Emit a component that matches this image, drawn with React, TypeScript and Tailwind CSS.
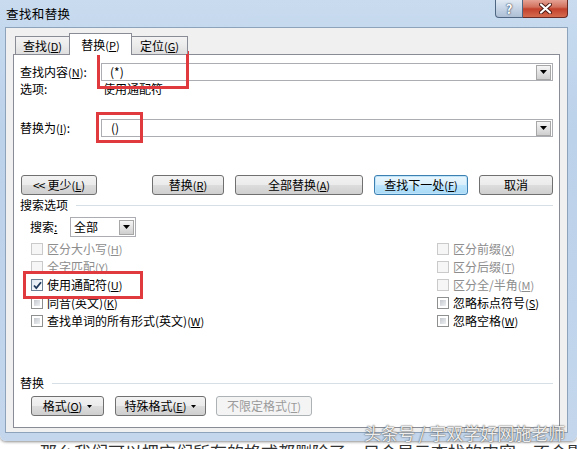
import React from "react"

const btnBase =
    "h-[20px] flex items-center justify-center rounded-[3px] border text-[12px] leading-[14px]"
const btnNormal =
    "text-black border-[#707070] bg-[linear-gradient(180deg,#f2f2f2_0%,#ebebeb_50%,#dddddd_50%,#cfcfcf_100%)]"
const btnFocus =
    "text-black border-[#3c7fb1] bg-[linear-gradient(180deg,#eaf6fd_0%,#d9f0fc_50%,#bee6fd_50%,#a7d9f5_100%)] shadow-[inset_0_0_0_1px_#bfe4f9]"
const btnDisabled = "border-[#adb2b5] bg-[#f4f4f4] text-[#9a9a9a]"

function Mn({ text, k }: { text: string; k: string }) {
    return (
        <span>
            {text}
            <span className="text-[11px]">
                (<span className="underline underline-offset-1">{k}</span>)
            </span>
        </span>
    )
}

function Arrow() {
    return (
        <span className="w-[15px] h-[15px] shrink-0 flex items-center justify-center border border-[#a7a7a7] bg-[linear-gradient(180deg,#f6f6f6_0%,#e2e2e2_50%,#cfcfcf_100%)]">
            <svg width="7" height="4" viewBox="0 0 7 4">
                <path d="M0 0h7L3.5 4z" fill="#000" />
            </svg>
        </span>
    )
}

function Caret() {
    return (
        <svg width="5" height="3" viewBox="0 0 5 3" className="ml-[5px]">
            <path d="M0 0h5L2.5 3z" fill="#000" />
        </svg>
    )
}

function Check({ state }: { state: "disabled" | "off" | "on" }) {
    if (state === "disabled") {
        return <span className="w-[12px] h-[12px] shrink-0 border border-[#cacaca] bg-[#f6f6f6]" />
    }
    if (state === "on") {
        return (
            <span className="w-[12px] h-[12px] shrink-0 border border-[#6d8196] bg-[linear-gradient(135deg,#dfe8f1,#ffffff)] flex items-center justify-center">
                <svg width="9" height="9" viewBox="0 0 9 9">
                    <path d="M1 4.5l2.3 2.5L8 1.2" stroke="#1f3a5c" strokeWidth="1.8" fill="none" />
                </svg>
            </span>
        )
    }
    return (
        <span className="w-[12px] h-[12px] shrink-0 border border-[#8e8f8f] bg-white p-[2px]">
            <span className="block w-full h-full bg-[linear-gradient(135deg,#c4c8ce,#eef0f2)]" />
        </span>
    )
}

function Row({ state, children }: { state: "disabled" | "off" | "on"; children: React.ReactNode }) {
    return (
        <div className={`h-[18px] flex items-center gap-[4px] ${state === "disabled" ? "text-[#8d8d8d]" : "text-black"}`}>
            <Check state={state} />
            <span className="whitespace-nowrap">{children}</span>
        </div>
    )
}

function GroupLabel({ text }: { text: string }) {
    return (
        <div className="h-[14px] flex items-center pl-[6px] pr-[6px]">
            <span>{text}</span>
            <span className="ml-[8px] flex-1 h-px bg-[#d5dfe5]" />
        </div>
    )
}

export default function App() {
    return (
        <div className="w-[577px] h-[449px] overflow-hidden bg-white flex flex-col font-['SimSun','Noto_Sans_CJK_SC',sans-serif] text-[12px] leading-[14px] text-black relative">
            {/* window frame */}
            <div className="h-[441px] shrink-0 flex flex-col rounded-b-[6px] bg-[linear-gradient(180deg,#c8dbef_0%,#bcd2ea_30%,#c3d6ec_100%)] shadow-[0_1px_3px_rgba(0,0,0,0.45)]">
                {/* title bar */}
                <div className="h-[27px] shrink-0 flex items-start justify-between">
                    <div className="pl-[6px] pt-[6px] text-[12.5px] leading-[16px] tracking-[0.4px] text-black">查找和替换</div>
                    <div className="flex mr-[9px] -mt-px">
                        <div className="w-[28px] h-[19px] flex items-center justify-center rounded-bl-[4px] border border-[#4f6683] border-t-0 bg-[linear-gradient(180deg,#e4ecf5_0%,#c7d5e6_50%,#aebfd5_100%)]">
                            <span className="text-[13px] leading-[13px] font-bold text-white [text-shadow:0_0_2px_#2d3e55,0_0_1px_#2d3e55]">?</span>
                        </div>
                        <div className="w-[45px] h-[19px] flex items-center justify-center rounded-br-[4px] border border-[#6b2a23] border-t-0 border-l-0 bg-[linear-gradient(180deg,#e9a99b_0%,#d1705d_45%,#c2412c_55%,#d46b4f_100%)]">
                            <svg width="13" height="11" viewBox="0 0 13 11">
                                <path d="M2 1.5l9 8M11 1.5l-9 8" stroke="#4a1a14" strokeWidth="4" strokeLinecap="round" />
                                <path d="M2 1.5l9 8M11 1.5l-9 8" stroke="#fff" strokeWidth="2.2" strokeLinecap="round" />
                            </svg>
                        </div>
                    </div>
                </div>

                {/* client area */}
                <div className="flex-1 ml-[5px] mr-[9px] mb-[8px] border border-[#8da2bb] bg-[#f0f0f0] flex flex-col">
                    {/* tabs */}
                    <div className="h-[26px] shrink-0 flex items-end pl-[9px] relative z-10">
                        <div className="w-[55px] h-[18px] flex items-center justify-center border border-b-0 border-[#898c95] bg-[linear-gradient(180deg,#f3f3f3_0%,#ebebeb_50%,#dedede_100%)]">
                            <Mn text="查找" k="D" />
                        </div>
                        <div className="w-[63px] h-[22px] -mb-px -ml-px flex items-center justify-center border border-b-0 border-[#898c95] bg-white relative z-10">
                            <Mn text="替换" k="P" />
                        </div>
                        <div className="w-[57px] h-[18px] -ml-px flex items-center justify-center border border-b-0 border-[#898c95] bg-[linear-gradient(180deg,#f3f3f3_0%,#ebebeb_50%,#dedede_100%)]">
                            <Mn text="定位" k="G" />
                        </div>
                    </div>

                    {/* tab panel */}
                    <div className="flex-1 mx-[7px] mb-[4px] border border-[#898c95] bg-white flex flex-col pt-[8px]">
                        {/* find */}
                        <div className="flex items-center pl-[6px] pr-[6px]">
                            <div className="w-[81px] shrink-0">
                                <Mn text="查找内容" k="N" />:
                            </div>
                            <div className="flex-1 h-[18px] border border-[#abadb3] flex items-center justify-between pl-[8px] pr-[1px]">
                                <span>(*)</span>
                                <Arrow />
                            </div>
                        </div>
                        <div className="flex items-center h-[14px] mt-[1px] pl-[6px]">
                            <span className="w-[83px] shrink-0">选项:</span>
                            <span>使用通配符</span>
                        </div>

                        {/* replace */}
                        <div className="flex items-center pl-[6px] pr-[6px] mt-[23px]">
                            <div className="w-[81px] shrink-0">
                                <Mn text="替换为" k="I" />:
                            </div>
                            <div className="flex-1 h-[18px] border border-[#abadb3] flex items-center justify-between pl-[9px] pr-[1px]">
                                <span>()</span>
                                <Arrow />
                            </div>
                        </div>

                        {/* buttons */}
                        <div className="flex mt-[38px] pl-[7px]">
                            <div className={`${btnBase} ${btnNormal} w-[76px]`}>
                                <span className="mr-[3px] tracking-[-1px]">&lt;&lt;</span>
                                <Mn text="更少" k="L" />
                            </div>
                            <div className={`${btnBase} ${btnNormal} w-[72px] ml-[55px]`}>
                                <Mn text="替换" k="R" />
                            </div>
                            <div className={`${btnBase} ${btnNormal} w-[128px] ml-[11px]`}>
                                <Mn text="全部替换" k="A" />
                            </div>
                            <div className={`${btnBase} ${btnFocus} w-[94px] ml-[11px]`}>
                                <Mn text="查找下一处" k="F" />
                            </div>
                            <div className={`${btnBase} ${btnNormal} w-[74px] ml-[11px]`}>取消</div>
                        </div>

                        {/* search options */}
                        <div className="mt-[3px]">
                            <GroupLabel text="搜索选项" />
                        </div>
                        <div className="flex items-center mt-[5px] pl-[16px]">
                            <span className="w-[40px] shrink-0">
                                搜索<span className="underline underline-offset-1">:</span>
                            </span>
                            <div className="w-[66px] h-[20px] border border-[#abadb3] flex items-center justify-between pl-[3px] pr-[1px]">
                                <span>全部</span>
                                <Arrow />
                            </div>
                        </div>

                        <div className="flex mt-[3px] pl-[17px]">
                            <div className="w-[406px] flex flex-col">
                                <Row state="disabled">
                                    <Mn text="区分大小写" k="H" />
                                </Row>
                                <Row state="disabled">
                                    <Mn text="全字匹配" k="Y" />
                                </Row>
                                <Row state="on">
                                    <Mn text="使用通配符" k="U" />
                                </Row>
                                <Row state="off">
                                    <Mn text="同音(英文)" k="K" />
                                </Row>
                                <Row state="off">
                                    <Mn text="查找单词的所有形式(英文)" k="W" />
                                </Row>
                            </div>
                            <div className="flex flex-col">
                                <Row state="disabled">
                                    <Mn text="区分前缀" k="X" />
                                </Row>
                                <Row state="disabled">
                                    <Mn text="区分后缀" k="T" />
                                </Row>
                                <Row state="disabled">
                                    <Mn text="区分全/半角" k="M" />
                                </Row>
                                <Row state="off">
                                    <Mn text="忽略标点符号" k="S" />
                                </Row>
                                <Row state="off">
                                    <Mn text="忽略空格" k="W" />
                                </Row>
                            </div>
                        </div>

                        {/* replace group */}
                        <div className="mt-[46px]">
                            <GroupLabel text="替换" />
                        </div>
                        <div className="flex mt-[6px] pl-[17px]">
                            <div className={`${btnBase} ${btnNormal} w-[73px] h-[19px]`}>
                                <Mn text="格式" k="O" />
                                <Caret />
                            </div>
                            <div className={`${btnBase} ${btnNormal} w-[91px] h-[19px] ml-[11px]`}>
                                <Mn text="特殊格式" k="E" />
                                <Caret />
                            </div>
                            <div className={`${btnBase} ${btnDisabled} w-[96px] h-[19px] ml-[10px]`}>
                                <Mn text="不限定格式" k="T" />
                            </div>
                        </div>
                    </div>
                </div>
            </div>

            {/* article text cut off below the dialog */}
            <div className="h-[8px] overflow-hidden pl-[40px] pt-[2px]">
                <div className="text-[17px] leading-[17px] text-[#333] whitespace-nowrap">
                    那么我们可以把它们所有的格式都删除了，只会显示查找的内容，不会影响其他部分的内容
                </div>
            </div>

            {/* red annotation boxes */}
            <div className="absolute left-[97px] top-[51px] w-[92px] h-[38px] border-[3px] border-[#e0393e]" />
            <div className="absolute left-[96px] top-[112px] w-[47px] h-[31px] border-[3px] border-[#e0393e]" />
            <div className="absolute left-[23px] top-[271px] w-[120px] h-[28px] border-[3px] border-[#e0393e]" />

            {/* watermark */}
            <div className="absolute left-[364px] top-[424px] text-[17px] leading-[18px] text-white/90 whitespace-nowrap [text-shadow:0_0_1px_#444,0_0_2px_#666]">
                头条号 / 宇双学好网施老师
            </div>
        </div>
    )
}
